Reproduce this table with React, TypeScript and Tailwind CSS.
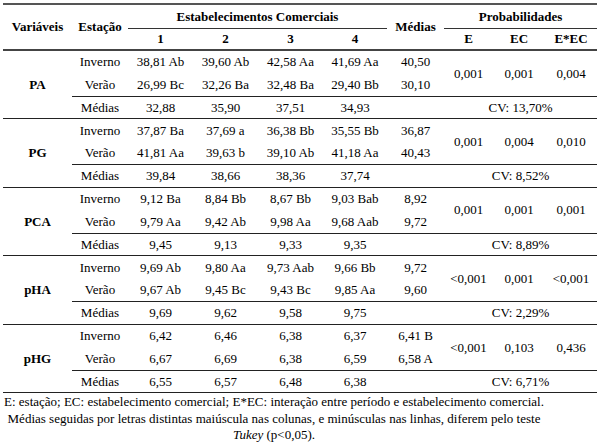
import React from 'react'

type Group = {
  name: string
  inverno: string[]
  verao: string[]
  medias: string[]
  probs: string[]
  cv: string
}

const groups: Group[] = [
  {
    name: 'PA',
    inverno: ['38,81 Ab', '39,60 Ab', '42,58 Aa', '41,69 Aa', '40,50'],
    verao: ['26,99 Bc', '32,26 Ba', '32,48 Ba', '29,40 Bb', '30,10'],
    medias: ['32,88', '35,90', '37,51', '34,93'],
    probs: ['0,001', '0,001', '0,004'],
    cv: 'CV: 13,70%',
  },
  {
    name: 'PG',
    inverno: ['37,87 Ba', '37,69 a', '36,38 Bb', '35,55 Bb', '36,87'],
    verao: ['41,81 Aa', '39,63 b', '39,10 Ab', '41,18 Aa', '40,43'],
    medias: ['39,84', '38,66', '38,36', '37,74'],
    probs: ['0,001', '0,004', '0,010'],
    cv: 'CV: 8,52%',
  },
  {
    name: 'PCA',
    inverno: ['9,12 Ba', '8,84 Bb', '8,67 Bb', '9,03 Bab', '8,92'],
    verao: ['9,79 Aa', '9,42 Ab', '9,98 Aa', '9,68 Aab', '9,72'],
    medias: ['9,45', '9,13', '9,33', '9,35'],
    probs: ['0,001', '0,001', '0,001'],
    cv: 'CV: 8,89%',
  },
  {
    name: 'pHA',
    inverno: ['9,69 Ab', '9,80 Aa', '9,73 Aab', '9,66 Bb', '9,72'],
    verao: ['9,67 Ab', '9,45 Bc', '9,43 Bc', '9,85 Aa', '9,60'],
    medias: ['9,69', '9,62', '9,58', '9,75'],
    probs: ['<0,001', '0,001', '<0,001'],
    cv: 'CV: 2,29%',
  },
  {
    name: 'pHG',
    inverno: ['6,42', '6,46', '6,38', '6,37', '6,41 B'],
    verao: ['6,67', '6,69', '6,38', '6,59', '6,58 A'],
    medias: ['6,55', '6,57', '6,48', '6,38'],
    probs: ['<0,001', '0,103', '0,436'],
    cv: 'CV: 6,71%',
  },
]

const widths = [69, 56, 65, 65, 65, 64, 57, 49, 52, 52]

export default function App() {
  return (
    <div className="w-[600px] h-[447px] bg-white text-black font-['Liberation_Serif','Times_New_Roman',serif] text-[13px] overflow-hidden">
      <div className="pt-[3px] pl-[3px]">
        <table className="w-[594px] table-fixed border-collapse text-center">
          <colgroup>
            {widths.map((w, i) => (
              <col key={i} style={{ width: w }} />
            ))}
          </colgroup>
          <thead>
            <tr className="h-[24px] border-t-2 border-[#555]">
              <th rowSpan={2} className="font-bold">Variáveis</th>
              <th rowSpan={2} className="font-bold">Estação</th>
              <th colSpan={4} className="font-bold border-b border-[#333]">Estabelecimentos Comerciais</th>
              <th rowSpan={2} className="font-bold">Médias</th>
              <th colSpan={3} className="font-bold border-b border-[#333]">Probabilidades</th>
            </tr>
            <tr className="h-[22px] border-b-2 border-[#444]">
              <th className="font-bold">1</th>
              <th className="font-bold">2</th>
              <th className="font-bold">3</th>
              <th className="font-bold">4</th>
              <th className="font-bold">E</th>
              <th className="font-bold">EC</th>
              <th className="font-bold">E*EC</th>
            </tr>
          </thead>
          {groups.map((g) => (
            <tbody key={g.name} className="border-b border-[#222]">
              <tr className="h-[23px]">
                <td rowSpan={3} className="font-bold">{g.name}</td>
                <td>Inverno</td>
                {g.inverno.map((v, i) => (
                  <td key={i} className="whitespace-nowrap">{v}</td>
                ))}
                {g.probs.map((p, i) => (
                  <td key={i} rowSpan={2}>{p}</td>
                ))}
              </tr>
              <tr className="h-[23px]">
                <td>Verão</td>
                {g.verao.map((v, i) => (
                  <td key={i} className="whitespace-nowrap">{v}</td>
                ))}
              </tr>
              <tr className="h-[22.6px]">
                <td className="border-t border-[#222]">Médias</td>
                {g.medias.map((v, i) => (
                  <td key={i} className="border-t border-[#222]">{v}</td>
                ))}
                <td className="border-t border-[#222]"></td>
                <td colSpan={3} className="border-t border-[#222]">{g.cv}</td>
              </tr>
            </tbody>
          ))}
        </table>
        <div className="w-[542px] flex flex-col items-center leading-[16.5px] pt-[1px]">
          <p className="whitespace-nowrap">
            E: estação; EC: estabelecimento comercial; E*EC: interação entre período e estabelecimento comercial.
          </p>
          <p className="whitespace-nowrap">
            Médias seguidas por letras distintas maiúscula nas colunas, e minúsculas nas linhas, diferem pelo teste
          </p>
          <p className="whitespace-nowrap">
            <i>Tukey</i> (p&lt;0,05).
          </p>
        </div>
      </div>
    </div>
  )
}
